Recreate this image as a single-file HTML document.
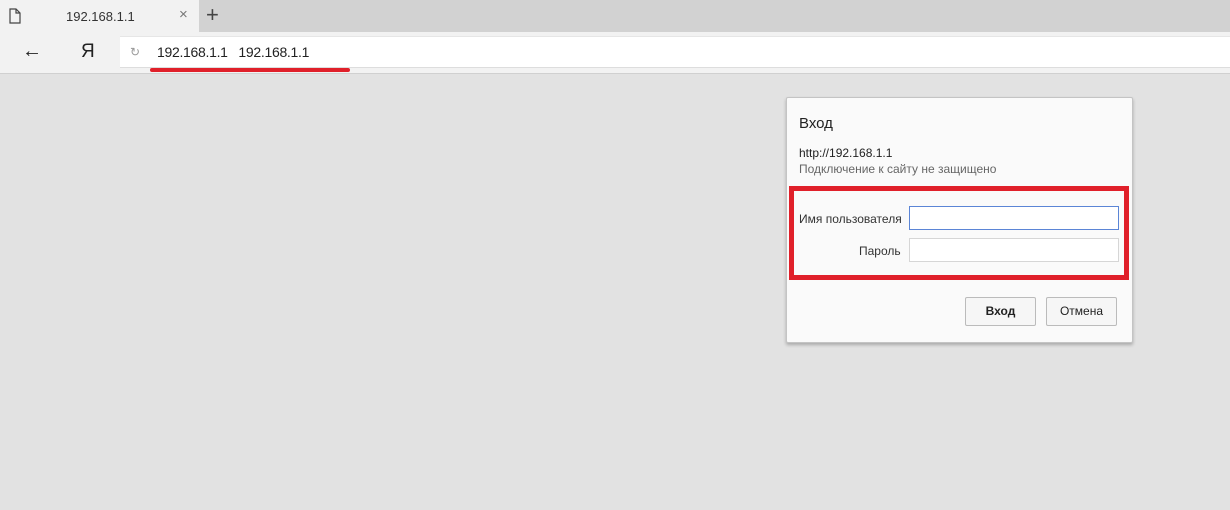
<!DOCTYPE html>
<html><head><meta charset="utf-8"><style>
*{margin:0;padding:0;box-sizing:border-box}
body{width:1230px;height:510px;overflow:hidden;background:#e2e2e2;font-family:"Liberation Sans","Noto Sans CJK SC",sans-serif;position:relative}
.abs{position:absolute}
</style></head><body>
<div class="abs" style="left:0;top:0;width:1230px;height:32px;background:#d2d2d2"></div>
<div class="abs" style="left:0;top:0;width:199px;height:32px;background:#f2f2f2"></div>
<svg class="abs" style="left:8px;top:8px" width="14" height="16" viewBox="0 0 14 16"><path d="M2 1h6l4 4v10H2z M8 1v4h4" fill="none" stroke="#444" stroke-width="1.2"/></svg>
<div class="abs" style="left:66px;top:9px;font-size:13px;color:#333">192.168.1.1</div>
<div class="abs" style="left:179px;top:6px;font-size:15px;color:#777">×</div>
<div class="abs" style="left:206px;top:2px;font-size:22px;color:#444">+</div>
<div class="abs" style="left:0;top:32px;width:1230px;height:42px;background:#f2f2f2;border-bottom:1px solid #d0d0d0"></div>
<div class="abs" style="left:22px;top:40px;font-size:20px;color:#222">←</div>
<div class="abs" style="left:81px;top:41px;font-size:19px;color:#222">Я</div>
<div class="abs" style="left:120px;top:36px;width:1110px;height:32px;background:#fff;border-top:1px solid #e6e6e6;border-bottom:1px solid #ddd"></div>
<div class="abs" style="left:130px;top:45px;font-size:12px;color:#999">↻</div>
<div class="abs" style="left:157px;top:44px;font-size:14px;color:#222;letter-spacing:-0.3px">192.168.1.1&nbsp;&nbsp;&nbsp;192.168.1.1</div>
<div class="abs" style="left:150px;top:68px;width:200px;height:4px;background:#e0202a;border-radius:2px"></div>

<div class="abs" style="left:786px;top:97px;width:347px;height:246px;background:#fafafa;border:1px solid #c4c4c4;box-shadow:0 2px 3px rgba(0,0,0,.25);border-radius:2px"></div>
<div class="abs" style="left:799px;top:115px;font-size:15px;color:#222">Вход</div>
<div class="abs" style="left:799px;top:146px;font-size:12px;color:#222">http://192.168.1.1</div>
<div class="abs" style="left:799px;top:162px;font-size:12px;color:#666">Подключение к сайту не защищено</div>
<div class="abs" style="left:789px;top:186px;width:340px;height:94px;border:5px solid #e0202a"></div>
<div class="abs" style="left:799px;top:212px;font-size:12px;color:#333">Имя пользователя</div>
<div class="abs" style="left:909px;top:206px;width:210px;height:24px;background:#fff;border:1px solid #5b85d6"></div>
<div class="abs" style="left:859px;top:244px;font-size:12px;color:#333">Пароль</div>
<div class="abs" style="left:909px;top:238px;width:210px;height:24px;background:#fff;border:1px solid #d6d6d6"></div>
<div class="abs" style="left:965px;top:297px;width:71px;height:29px;background:#f6f6f6;border:1px solid #bbb;border-radius:2px;font-size:12px;font-weight:bold;color:#222;text-align:center;line-height:27px">Вход</div>
<div class="abs" style="left:1046px;top:297px;width:71px;height:29px;background:#f6f6f6;border:1px solid #bbb;border-radius:2px;font-size:12px;color:#222;text-align:center;line-height:27px">Отмена</div>
</body></html>
